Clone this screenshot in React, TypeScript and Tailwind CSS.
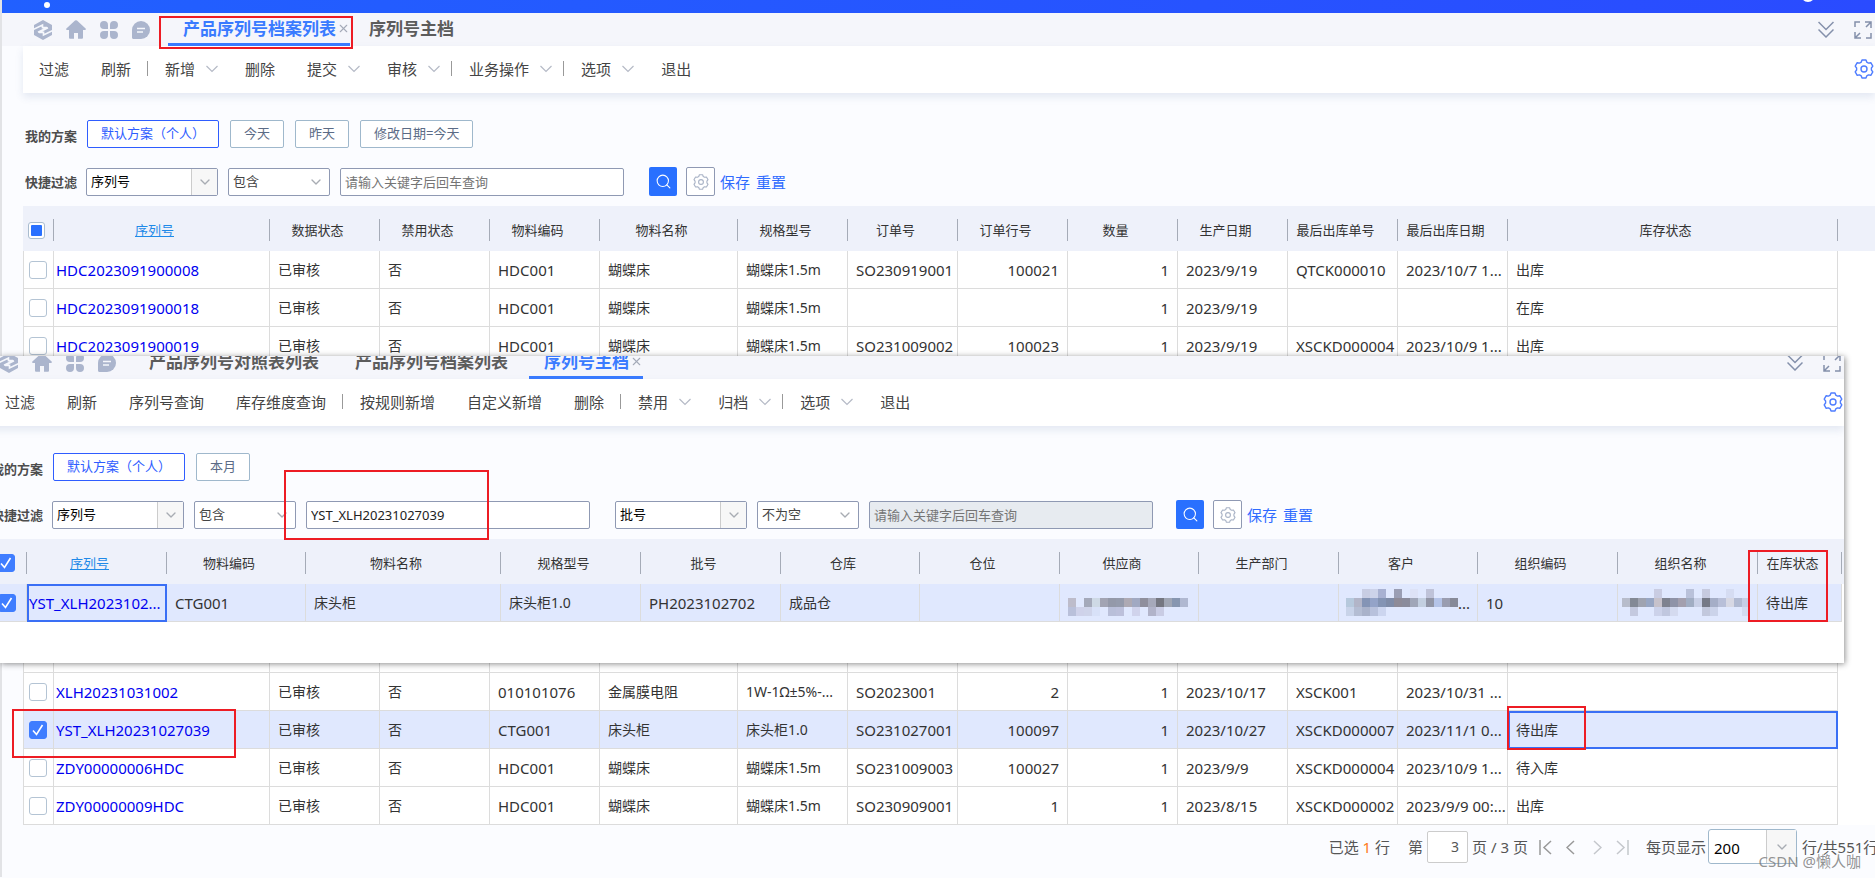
import React from 'react';
import { ChevronDown, Search, X } from 'lucide-react';
import clsx from 'clsx';

type Column = {
  title: string;
  width: string;
  align?: 'right';
  link?: boolean;
  cjk?: boolean;
};

type Row = {
  cells: React.ReactNode[];
  checked?: boolean;
  focus?: number;
};

type ToolItem = { name: string; menu?: boolean; divider?: boolean };

const mainTools: ToolItem[] = [
  { name: '过滤' },
  { name: '刷新', divider: true },
  { name: '新增', menu: true },
  { name: '删除' },
  { name: '提交', menu: true },
  { name: '审核', menu: true, divider: true },
  { name: '业务操作', menu: true, divider: true },
  { name: '选项', menu: true },
  { name: '退出' },
];

const masterTools: ToolItem[] = [
  { name: '过滤' },
  { name: '刷新' },
  { name: '序列号查询' },
  { name: '库存维度查询', divider: true },
  { name: '按规则新增' },
  { name: '自定义新增' },
  { name: '删除', divider: true },
  { name: '禁用', menu: true },
  { name: '归档', menu: true, divider: true },
  { name: '选项', menu: true },
  { name: '退出' },
];

const mainColumns: Column[] = [
  { title: '序列号', width: 'w-[216px]', link: true },
  { title: '数据状态', width: 'w-[110px]', cjk: true },
  { title: '禁用状态', width: 'w-[110px]', cjk: true },
  { title: '物料编码', width: 'w-[110px]' },
  { title: '物料名称', width: 'w-[138px]', cjk: true },
  { title: '规格型号', width: 'w-[110px]', cjk: true },
  { title: '订单号', width: 'w-[110px]' },
  { title: '订单行号', width: 'w-[110px]', align: 'right' },
  { title: '数量', width: 'w-[110px]', align: 'right' },
  { title: '生产日期', width: 'w-[110px]' },
  { title: '最后出库单号', width: 'w-[110px]' },
  { title: '最后出库日期', width: 'w-[110px]' },
  { title: '库存状态', width: 'w-auto', cjk: true },
];

const topRows: Row[] = [
  { cells: ['HDC2023091900008', '已审核', '否', 'HDC001', '蝴蝶床', '蝴蝶床1.5m', 'SO230919001', '100021', '1', '2023/9/19', 'QTCK000010', '2023/10/7 1...', '出库'] },
  { cells: ['HDC2023091900018', '已审核', '否', 'HDC001', '蝴蝶床', '蝴蝶床1.5m', '', '', '1', '2023/9/19', '', '', '在库'] },
  { cells: ['HDC2023091900019', '已审核', '否', 'HDC001', '蝴蝶床', '蝴蝶床1.5m', 'SO231009002', '100023', '1', '2023/9/19', 'XSCKD000004', '2023/10/9 1...', '出库'] },
];

const bottomRows: Row[] = [
  { cells: ['XLH20231031002', '已审核', '否', '010101076', '金属膜电阻', '1W-1Ω±5%-...', 'SO2023001', '2', '1', '2023/10/17', 'XSCK001', '2023/10/31 ...', ''] },
  {
    cells: ['YST_XLH20231027039', '已审核', '否', 'CTG001', '床头柜', '床头柜1.0', 'SO231027001', '100097', '1', '2023/10/27', 'XSCKD000007', '2023/11/1 0...', '待出库'],
    checked: true,
    focus: 12,
  },
  { cells: ['ZDY00000006HDC', '已审核', '否', 'HDC001', '蝴蝶床', '蝴蝶床1.5m', 'SO231009003', '100027', '1', '2023/9/9', 'XSCKD000004', '2023/10/9 1...', '待入库'] },
  { cells: ['ZDY00000009HDC', '已审核', '否', 'HDC001', '蝴蝶床', '蝴蝶床1.5m', 'SO230909001', '1', '1', '2023/8/15', 'XSCKD000002', '2023/9/9 00:...', '出库'] },
];

const masterColumns: Column[] = [
  { title: '序列号', width: 'w-[140px]', link: true },
  { title: '物料编码', width: 'w-[139px]' },
  { title: '物料名称', width: 'w-[195px]', cjk: true },
  { title: '规格型号', width: 'w-[140px]', cjk: true },
  { title: '批号', width: 'w-[140px]' },
  { title: '仓库', width: 'w-[139px]', cjk: true },
  { title: '仓位', width: 'w-[140px]' },
  { title: '供应商', width: 'w-[139px]' },
  { title: '生产部门', width: 'w-[140px]' },
  { title: '客户', width: 'w-[139px]' },
  { title: '组织编码', width: 'w-[140px]' },
  { title: '组织名称', width: 'w-[140px]' },
  { title: '在库状态', width: 'w-auto', cjk: true },
];

// Masked values: one colour per block, '' leaves a hole
const supplierMask = [
  ['', '', '', '', '', '', '', '', '', '', '', '', '', '', ''],
  ['#bdbccb', '', '#a4a9ba', '#ced9e5', '#a2a4b3', '#9499a9', '#959bac', '#aeaab4', '#a1a9c2', '#8f8f9d', '#a6a9ba', '#757781', '#a0a6b4', '#8796b0', '#b0b8d1'],
  ['#b9c0da', '#cfd2ea', '#cfd4ea', '#d8e1f8', '', '#b9bfd9', '#bcc0db', '', '#d0d3ec', '', '#b1b3c9', '#c9cce4', '', '', ''],
];

const customerMask = [
  ['', '', '#c8cde3', '#cdd3ea', '#a8b1d2', '', '#9a9eb4', '', '#dde2f6', '', '#bfc3d9', '', '', ''],
  ['#b6c9dd', '#b2b5c8', '#8494b5', '#94a3c8', '#8494b4', '#7f8ca8', '#8e8b98', '#8b8c9c', '#a0a6b8', '#c3cfe0', '#9296a7', '#b5c4e8', '#9a9db0', '#878a98'],
  ['#c8d3e9', '#b4bdd3', '#a9b2ca', '#b8c1dc', '#ccd5ef', '', '', '', '', '', '', '', '', ''],
];

const orgMask = [
  ['', '', '', '', '#c9cce2', '', '', '', '#b9c1da', '', '#c6cadf', '', '', '#d5dcf2', '', ''],
  ['#b7bccb', '#838995', '#9fa3b0', '#98a6c3', '#c7c2cb', '#7e828f', '#8f93a7', '#a39fae', '#a1adc3', '#c8cfe6', '#757986', '#a5aec7', '#b8bfd8', '#d7d8e4', '#b1bad2', '#c6cee5'],
  ['', '#c4c9df', '', '', '#ccd2ea', '#c0c7df', '#d4daef', '', '', '', '#c2c8dd', '#cbd3ea', '', '', '', '#d3dbf1'],
];

const Mosaic: React.FC<{ blocks: string[][] }> = ({ blocks }) => (
  <svg width={blocks[0].length * 8} height={blocks.length * 9} className="shrink-0" aria-hidden="true">
    {blocks.map((line, y) =>
      line.map((fill, x) => fill && <rect key={`${x}-${y}`} x={x * 8} y={y * 9} width="8" height="9" fill={fill} />),
    )}
  </svg>
);

const masterRows: Row[] = [
  {
    cells: [
      'YST_XLH2023102...',
      'CTG001',
      '床头柜',
      '床头柜1.0',
      'PH2023102702',
      '成品仓',
      '',
      <span className="flex"><Mosaic blocks={supplierMask} /></span>,
      '',
      <span className="flex items-center justify-center">
        <Mosaic blocks={customerMask} />
        ...
      </span>,
      '10',
      <span className="-mx-1 flex"><Mosaic blocks={orgMask} /></span>,
      '待出库',
    ],
    checked: true,
    focus: 0,
  },
];

const CloudLogo = () => (
  <svg viewBox="0 0 18 20" className="h-5 w-[18px]">
    <path d="M9 0l9 5v10l-9 5-9-5V5z" fill="#abb5cd" />
    <path d="M-1 9.500L8.500 5v2.600h4.500L4 12.200M19 10.500L9.500 15v-2.600H5L14 7.800" fill="none" stroke="#f5f7fc" strokeWidth="1.600" />
  </svg>
);

const HomeIcon = () => (
  <svg viewBox="0 0 20 19" className="h-[19px] w-5" fill="#abb5cd">
    <path d="M9 .6a1.500 1.500 0 0 1 2 0L19.600 8.500c.6.600.2 1.500-.6 1.500H17v7.500c0 .8-.5 1.300-1.300 1.300H12V13H8v5.800H4.300c-.8 0-1.300-.5-1.300-1.300V10H1C.2 10-.2 9.100.4 8.500z" />
  </svg>
);

const AppsIcon = () => (
  <svg viewBox="0 0 18 18" className="h-[18px] w-[18px]" fill="#abb5cd">
    <path d="M4 0a4 4 0 0 1 4 4v4H4a4 4 0 0 1 0-8zM14 0a4 4 0 0 1 0 8h-4V4a4 4 0 0 1 4-4zM4 10h4v4a4 4 0 1 1-4-4zM10 10h4a4 4 0 1 1-4 4z" />
  </svg>
);

const ChatIcon = () => (
  <svg viewBox="0 0 18 18" className="h-[18px] w-[18px]">
    <path d="M9 0a9 9 0 0 1 0 18H1.500C.600 18 0 17.400 0 16.500V9a9 9 0 0 1 9-9z" fill="#abb5cd" />
    <path d="M5 7.500h8M5 11h6" stroke="#f5f7fc" strokeWidth="1.600" />
  </svg>
);

const ExpandIcon = () => (
  <svg viewBox="0 0 18 18" className="h-[18px] w-[18px]" fill="none" stroke="#8490ab" strokeWidth="1.500">
    <path d="M1 6V1h5M11 1h6v6M17 1l-5 5M17 12v5h-5M7 17H1v-6M1 17l5-5" />
  </svg>
);

const GearIcon = ({ className }: { className: string }) => (
  <svg viewBox="0 0 20 20" className={className} fill="none" stroke="currentColor">
    <path d="M8 1h4l.8 2.200 1.700.9 2.300-.4 2 3.400-1.400 1.900v2l1.400 1.900-2 3.400-2.300-.4-1.700.9L12 19H8l-.8-2.200-1.700-.9-2.300.4-2-3.400L2.600 11V9L1.200 7.100l2-3.400 2.300.4 1.700-.9z" strokeWidth="1.400" strokeLinejoin="round" />
    <circle cx="10" cy="10" r="3" strokeWidth="1.400" />
  </svg>
);

const TabBar: React.FC<{ tabs: string[]; active: string }> = ({ tabs, active }) => (
  <div className="flex h-[33px] items-center bg-[#f5f6fb] pl-8 pr-[3px]">
    <div className="mr-[18px] flex items-center gap-[14px]">
      <CloudLogo />
      <HomeIcon />
      <AppsIcon />
      <ChatIcon />
    </div>
    <nav className="flex h-full items-end">
      {tabs.map((tab) => {
        const isActive = tab === active;
        return (
          <div
            key={tab}
            className={clsx(
              'flex h-[32px] items-center border-b-[3px] pl-[15px]',
              isActive ? 'mr-1 border-[#3a7bff] text-[#3a7bff]' : 'border-transparent pr-[21px] text-[#5c5c5c]',
            )}
          >
            <a href="#" className="text-[17px] leading-6 font-bold">{tab}</a>
            {isActive && (
              <button type="button" aria-label="关闭" className="ml-px text-[#a4aab8]">
                <X className="h-[13px] w-[13px]" strokeWidth={2} />
              </button>
            )}
          </div>
        );
      })}
    </nav>
    <div className="ml-auto flex items-center gap-5 text-[#8490ab]">
      <button type="button" aria-label="展开">
        <svg viewBox="0 0 16 17" className="h-[17px] w-4" fill="none" stroke="currentColor" strokeWidth="1.500">
          <path d="M.5 1L8 8.500 15.500 1M.5 8.500L8 16l7.500-7.500" />
        </svg>
      </button>
      <button type="button" aria-label="全屏">
        <ExpandIcon />
      </button>
    </div>
  </div>
);

const Toolbar: React.FC<{ items: ToolItem[] }> = ({ items }) => (
  <div className="relative ml-[21px] flex h-[47px] items-center bg-white pb-[2px] shadow-[0_4px_8px_rgba(60,90,150,0.12)]">
    {items.map((item) => (
      <React.Fragment key={item.name}>
        <button
          type="button"
          className={clsx('flex items-center pl-4 text-[15px] leading-6 text-[#444]', item.menu ? 'pr-[11px]' : 'pr-4')}
        >
          {item.name}
          {item.menu && (
            <svg viewBox="0 0 12 8" className="ml-[11px] h-2 w-3" fill="none" stroke="#b5bac6" strokeWidth="1.200">
              <path d="M.5 1L6 6.500 11.500 1" />
            </svg>
          )}
        </button>
        {item.divider && <span className="h-[15px] w-[2px] border-l border-[#999]" />}
      </React.Fragment>
    ))}
    <button type="button" aria-label="设置" className="ml-auto mr-px text-[#4f7dff]">
      <GearIcon className="h-5 w-5" />
    </button>
  </div>
);

const Schemes: React.FC<{ names: string[] }> = ({ names }) => (
  <div className="flex items-end pl-[23px]">
    <span className="w-[62px] text-[13px] leading-6 font-bold text-[#4d4d4d]">我的方案</span>
    <div className="flex gap-[11px]">
      {names.map((name, i) => (
        <button
          key={name}
          type="button"
          className={clsx(
            'h-7 rounded-[2px] border bg-white px-[13px] text-[13px]',
            i === 0 ? 'border-[#2f5dff] text-[#2f5dff]' : 'border-[#9fb8cc] text-[#5b6b86]',
          )}
        >
          {name}
        </button>
      ))}
    </div>
  </div>
);

const Field: React.FC<{ id: string; value: string; split?: boolean; label?: string }> = ({ id, value, split, label }) => (
  <div className={clsx('relative h-7', split ? 'w-[132px]' : 'w-[102px]')}>
    <select
      id={id}
      aria-label={label}
      defaultValue={value}
      className={clsx(
        'h-full w-full appearance-none rounded-[2px] border border-[#8f99b3] bg-white pl-1 text-[13px]',
        split ? 'text-black' : 'text-[#444]',
      )}
    >
      <option>{value}</option>
    </select>
    <span
      className={clsx(
        'pointer-events-none absolute inset-y-px right-px flex w-[26px] items-center justify-center',
        split && 'border-l border-[#ccc] bg-[#f7f7f7]',
      )}
    >
      <ChevronDown className="h-4 w-4 text-[#a8acb3]" strokeWidth={2} />
    </span>
  </div>
);

const Keyword: React.FC<{ id: string; value?: string; disabled?: boolean }> = ({ id, value, disabled }) => (
  <input
    id={id}
    type="text"
    aria-label="关键字"
    defaultValue={value}
    disabled={disabled}
    placeholder="请输入关键字后回车查询"
    className={clsx(
      'h-7 w-[284px] rounded-[2px] border border-[#8f99b3] pl-1 text-[13px] text-[#222] placeholder:text-[#757575]',
      disabled ? 'bg-[#e7ebf0]' : 'bg-white',
    )}
  />
);

const SearchActions = () => (
  <div className="flex items-center">
    <button type="button" aria-label="查询" className="flex h-[29px] w-7 items-center justify-center rounded-[2px] bg-[#2970ff] text-white">
      <Search className="h-[17px] w-[17px]" strokeWidth={1.5} />
    </button>
    <button type="button" aria-label="过滤设置" className="ml-[9px] flex h-[29px] w-[29px] items-center justify-center rounded-[2px] border border-[#8f99b3] bg-white text-[#a9b3c6]">
      <GearIcon className="h-4 w-4" />
    </button>
    <a href="#" className="ml-[5px] text-[15px] leading-6 text-[#2f6bff]">保存</a>
    <a href="#" className="ml-[6px] text-[15px] leading-6 text-[#2f6bff]">重置</a>
  </div>
);

const FilterArea: React.FC<{ id: string; schemes: string[]; children: React.ReactNode }> = ({ id, schemes, children }) => (
  <div className="bg-[#fbfcff] pt-[27px] pb-[10px]">
    <Schemes names={schemes} />
    <div className="mt-[19px] flex h-[29px] items-center pl-[23px]">
      <label htmlFor={id} className="w-[61px] text-[13px] leading-6 font-bold text-[#4d4d4d]">快捷过滤</label>
      {children}
    </div>
  </div>
);

const CheckBox: React.FC<{ checked?: boolean; label: string }> = ({ checked, label }) => (
  <span className="relative mx-auto flex h-[18px] w-[18px] items-center justify-center">
    <input
      type="checkbox"
      aria-label={label}
      defaultChecked={checked}
      className="h-[18px] w-[18px] appearance-none rounded-[3px] border border-[#b4c4d4] bg-white checked:border-[#3f7dff] checked:bg-[#3f7dff]"
    />
    {checked && (
      <svg viewBox="0 0 18 18" className="pointer-events-none absolute inset-0" fill="none" stroke="#fff" strokeWidth="1.600">
        <path d="M4 9.500L7.500 13.500 13.500 4" />
      </svg>
    )}
  </span>
);

const GridRow: React.FC<{ row: Row; columns: Column[]; bordered?: boolean }> = ({ row, columns, bordered }) => (
  <tr className={row.checked ? 'bg-[#e0e8fe]' : 'bg-white'}>
    <td className={clsx('h-[38px] border-b border-r border-[#dcdcdc] py-0 pr-[2px] pl-0', bordered && 'border-l')}>
      <CheckBox checked={row.checked} label="选择行" />
    </td>
    {row.cells.map((cell, i) => (
      <td
        key={columns[i].title}
        className={clsx(
          'overflow-hidden border-b border-r border-[#dcdcdc] py-0 whitespace-nowrap text-[#333]',
          columns[i].cjk ? 'text-[14px]' : 'text-[15px]',
          columns[i].link ? 'px-[2px]' : 'px-2',
          columns[i].align === 'right' && 'text-right',
          row.focus === i && 'outline-2 -outline-offset-2 outline-[#3a6ff5]',
        )}
      >
        {columns[i].link ? <a href="#" className="text-[#0000f0]">{cell}</a> : cell}
      </td>
    ))}
    <td className="bg-white p-0" />
  </tr>
);

const Grid: React.FC<{ columns: Column[]; selectAll: React.ReactNode; check: string; tail: string; children: React.ReactNode }> = ({
  columns,
  selectAll,
  check,
  tail,
  children,
}) => (
  <table className="w-full table-fixed border-separate border-spacing-0 leading-5">
    <thead>
      <tr className="bg-[#eef1fa]">
        <th className={clsx('h-[45px] px-0 pt-[3px] pb-0', check)}>
          <div className="flex h-[22px] items-center border-r border-[#a5abb7] pr-[3px]">{selectAll}</div>
        </th>
        {columns.map((column) => (
          <th key={column.title} className={clsx('px-0 pt-[3px] pb-0 text-[13px] font-normal text-[#333]', column.width)}>
            <div className="h-[22px] border-r border-[#a5abb7] pr-[14px] leading-[22px] whitespace-nowrap">
              {column.link ? <a href="#" className="text-[#1f8ae8] underline">{column.title}</a> : column.title}
            </div>
          </th>
        ))}
        <th className={clsx('p-0', tail)} />
      </tr>
    </thead>
    <tbody>{children}</tbody>
  </table>
);

const Pager = () => (
  <footer className="flex h-[52px] items-start justify-end overflow-hidden bg-[#fbfcff] pt-1 text-[15px] leading-9 whitespace-nowrap text-[#555]">
    <span>已选 <span className="text-[#ff7a1a]">1</span> 行</span>
    <label htmlFor="page" className="ml-[18px]">第</label>
    <input id="page" type="text" defaultValue="3" className="mx-1 mt-[2px] h-8 w-[41px] rounded-[2px] border border-[#ccc] bg-white pr-2 text-right text-[14px]" />
    <span>页 / 3 页</span>
    <div className="ml-[11px] flex h-9 items-center gap-[14px] text-[#999]">
      <button type="button" aria-label="首页">
        <svg viewBox="0 0 13 15" className="h-[15px] w-[13px]" fill="none" stroke="currentColor" strokeWidth="1.500"><path d="M1 0v15M12 1L5 7.500 12 14" /></svg>
      </button>
      <button type="button" aria-label="上一页">
        <svg viewBox="0 0 9 15" className="h-[15px] w-[9px]" fill="none" stroke="currentColor" strokeWidth="1.500"><path d="M8 1L1 7.500 8 14" /></svg>
      </button>
      <button type="button" aria-label="下一页" className="ml-1 text-[#c4c7cc]">
        <svg viewBox="0 0 9 15" className="h-[15px] w-[9px]" fill="none" stroke="currentColor" strokeWidth="1.500"><path d="M1 1l7 6.500L1 14" /></svg>
      </button>
      <button type="button" aria-label="末页" className="text-[#c4c7cc]">
        <svg viewBox="0 0 13 15" className="h-[15px] w-[13px]" fill="none" stroke="currentColor" strokeWidth="1.500"><path d="M1 1l7 6.500L1 14M12 0v15" /></svg>
      </button>
    </div>
    <label htmlFor="page-size" className="mr-[2px] ml-[17px]">每页显示</label>
    <div className="relative h-[35px] w-[89px]">
      <select id="page-size" defaultValue="200" className="h-full w-full appearance-none rounded-[3px] border border-[#9fb8cc] bg-white pl-[5px] text-[15px] text-black">
        <option>200</option>
      </select>
      <span className="pointer-events-none absolute inset-y-px right-px flex w-[30px] items-center justify-center border-l border-[#ccc] bg-[#f7f7f7]">
        <ChevronDown className="h-4 w-4 text-[#a8acb3]" strokeWidth={2} />
      </span>
    </div>
    <span className="ml-[5px] w-[73px]">行/共551行</span>
  </footer>
);

const SerialMasterWindow = () => (
  <section className="absolute top-[356px] right-[31px] left-0 h-[307px] overflow-hidden bg-white shadow-[1px_1px_6px_rgba(0,0,0,0.45)]">
    <div className="-mt-[10px] -ml-8">
      <TabBar tabs={['产品序列号对照表列表', '产品序列号档案列表', '序列号主档']} active="序列号主档" />
      <Toolbar items={masterTools} />
      <FilterArea id="master-field" schemes={['默认方案（个人）', '本月']}>
        <Field id="master-field" value="序列号" split />
        <div className="ml-[10px]"><Field id="master-op" value="包含" label="条件" /></div>
        <div className="mr-[25px] ml-[10px]"><Keyword id="master-key" value="YST_XLH20231027039" /></div>
        <Field id="lot-field" value="批号" label="字段" split />
        <div className="ml-[10px]"><Field id="lot-op" value="不为空" label="条件" /></div>
        <div className="mr-[23px] ml-[10px]"><Keyword id="lot-key" disabled /></div>
        <SearchActions />
      </FilterArea>
      <div className="ml-[21px]">
        <Grid columns={masterColumns} selectAll={<CheckBox checked label="全选" />} check="w-[38px]" tail="w-[2px]">
          {masterRows.map((row, i) => (
            <GridRow key={i} row={row} columns={masterColumns} />
          ))}
        </Grid>
      </div>
    </div>
    <div className="pointer-events-none absolute top-[114px] left-[284px] h-[70px] w-[205px] border-2 border-[#ed1c24]" />
    <div className="pointer-events-none absolute top-[194px] right-4 h-[72px] w-20 border-2 border-[#ed1c24]" />
  </section>
);

const App: React.FC = () => {
  return (
    <div className="relative min-h-screen overflow-hidden bg-[#fbfcff] font-['Noto_Sans','Noto_Sans_CJK_SC',sans-serif]">
      <main className="border-l-2 border-[#e2e3e6]">
        <header className="relative h-[13px] overflow-hidden bg-linear-to-r from-[#2160ff] to-[#2a4bff]">
          <span className="absolute top-[2px] left-[42px] h-[6px] w-[6px] rounded-full bg-white" />
          <span className="absolute -top-3 right-[60px] h-[14px] w-[14px] rounded-full bg-white" />
        </header>
        <TabBar tabs={['产品序列号档案列表', '序列号主档']} active="产品序列号档案列表" />
        <Toolbar items={mainTools} />
        <FilterArea id="main-field" schemes={['默认方案（个人）', '今天', '昨天', '修改日期=今天']}>
          <Field id="main-field" value="序列号" split />
          <div className="ml-[10px]"><Field id="main-op" value="包含" label="条件" /></div>
          <div className="mr-[25px] ml-[10px]"><Keyword id="main-key" /></div>
          <SearchActions />
        </FilterArea>
        <div className="ml-[21px] bg-white">
          <Grid
            columns={mainColumns}
            check="w-[31px]"
            tail="w-[37px]"
            selectAll={
              <span className="relative mx-auto flex h-[17px] w-[17px] items-center justify-center">
                <input type="checkbox" aria-label="全选" className="h-[17px] w-[17px] appearance-none rounded-[3px] border border-[#a9bccf] bg-white" />
                <span className="pointer-events-none absolute h-[11px] w-[11px] rounded-[1px] bg-[#2970ff]" />
              </span>
            }
          >
            {topRows.map((row) => (
              <GridRow key={String(row.cells[0])} row={row} columns={mainColumns} bordered />
            ))}
            {/* rows scrolled behind the floating window */}
            <tr>
              <td className="h-[308px] border-x border-b border-[#dcdcdc] p-0" />
              {mainColumns.map((column) => (
                <td key={column.title} className="border-r border-b border-[#dcdcdc] p-0" />
              ))}
              <td className="p-0" />
            </tr>
            {bottomRows.map((row) => (
              <GridRow key={String(row.cells[0])} row={row} columns={mainColumns} bordered />
            ))}
          </Grid>
        </div>
        <Pager />
      </main>

      <SerialMasterWindow />

      {/* highlights */}
      <div className="pointer-events-none absolute top-4 left-[159px] h-[33px] w-[194px] border-2 border-[#ed1c24]" />
      <div className="pointer-events-none absolute top-[709px] left-3 h-[49px] w-[224px] border-2 border-[#ed1c24]" />
      <div className="pointer-events-none absolute top-[706px] right-[289px] h-[44px] w-[79px] border-2 border-[#ed1c24]" />
      <span className="pointer-events-none absolute right-[14px] bottom-[5px] text-[15px] leading-6 text-[#777]/80">CSDN @懒人咖</span>
    </div>
  );
};

export default App;
